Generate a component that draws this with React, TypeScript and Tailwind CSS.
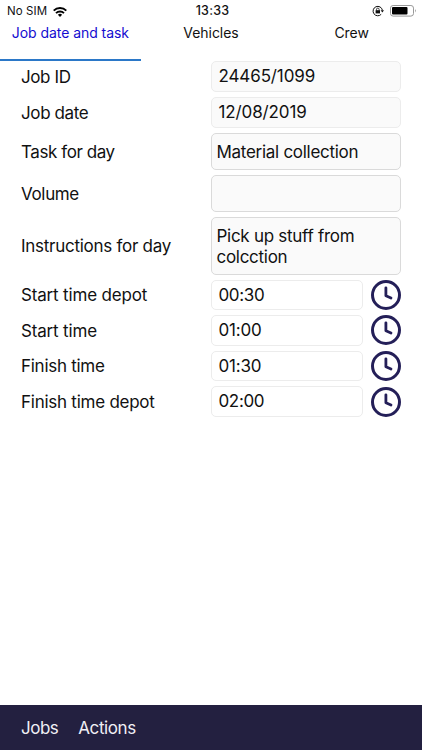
import React, { useState } from "react";

type Field = {
  label: string;
  value: string;
  kind: "readonly" | "select" | "area" | "time";
  labelClass: string;
  valueClass: string;
};

const fields: Field[] = [
  { label: "Job ID", value: "24465/1099", kind: "readonly", labelClass: "tracking-[-0.4px]", valueClass: "tracking-[-0.12px]" },
  { label: "Job date", value: "12/08/2019", kind: "readonly", labelClass: "tracking-[-0.38px]", valueClass: "tracking-[-0.12px]" },
  { label: "Task for day", value: "Material collection", kind: "select", labelClass: "tracking-[-0.42px]", valueClass: "tracking-[-0.28px]" },
  { label: "Volume", value: "", kind: "select", labelClass: "tracking-[-0.35px]", valueClass: "" },
  { label: "Instructions for day", value: "Pick up stuff from colcction", kind: "area", labelClass: "tracking-[-0.27px]", valueClass: "tracking-[-0.28px]" },
  { label: "Start time depot", value: "00:30", kind: "time", labelClass: "tracking-[-0.17px]", valueClass: "tracking-[-0.35px]" },
  { label: "Start time", value: "01:00", kind: "time", labelClass: "tracking-[-0.17px]", valueClass: "tracking-[-0.2px]" },
  { label: "Finish time", value: "01:30", kind: "time", labelClass: "tracking-[-0.27px]", valueClass: "tracking-[-0.2px]" },
  { label: "Finish time depot", value: "02:00", kind: "time", labelClass: "tracking-[-0.25px]", valueClass: "tracking-[-0.35px]" },
];

const boxStyles = {
  readonly: "w-[190.5px] h-[31px] pl-[7px] border-[#ececec] bg-[#fafafa]",
  select: "w-[190.5px] h-[37px] pl-[5px] pt-px border-[#dadada] bg-[#fafafa]",
  area: "w-[190.5px] h-[57.5px] pl-[5px] pr-6 pt-[2px] border-[#dadada] bg-[#fafafa]",
  time: "w-[152.5px] h-[30.6px] pl-[7px] border-[#ececec] bg-white",
};

const ClockIcon = () => (
  <svg width="30" height="30" viewBox="0 0 30 30" fill="none" stroke="#241f58">
    <circle cx="15" cy="15" r="13.5" strokeWidth="3" />
    <path d="M14.9 7.8V15.7L20 18" strokeWidth="2.8" strokeLinecap="round" strokeLinejoin="round" />
  </svg>
);

const StatusBar = () => (
  <div className="h-[22px] grid grid-cols-3 items-center text-[#111]">
    <div className="flex items-center pl-[7px] gap-[6px] pt-px">
      <span className="text-[11.5px] tracking-[0.1px]">No SIM</span>
      <svg width="14" height="10" viewBox="0 0 14 10" fill="none" stroke="#000" strokeWidth="1.9">
        <path d="M0.7 3.6A8.9 8.9 0 0 1 13.3 3.6" />
        <path d="M3 6.1A5.7 5.7 0 0 1 11 6.1" />
        <path d="M7 10L4.9 7.8A3 3 0 0 1 9.1 7.8Z" fill="#000" stroke="none" />
      </svg>
    </div>
    <span className="text-center text-[12.5px] font-medium pl-[3px] pt-px tracking-[0.2px]">13:33</span>
    <div className="flex items-center justify-end pr-[5px] gap-[6px]">
      <svg width="12" height="12" viewBox="0 0 12 12" fill="none" stroke="#111">
        <path d="M9.2 9.3A4.7 4.7 0 1 1 10.4 5.2" strokeWidth="1" />
        <path d="M8.6 5.2H12L10.4 7.4Z" fill="#111" stroke="none" />
        <rect x="3.6" y="5.2" width="4.4" height="3.2" fill="#111" stroke="none" />
        <path d="M4.5 5.5V4.4a1.3 1.3 0 0 1 2.6 0V5.5" strokeWidth="0.8" />
      </svg>
      <svg width="27" height="12" viewBox="0 0 27 12">
        <rect x="0.5" y="0.5" width="23" height="10.6" rx="2.6" fill="none" stroke="#999" />
        <rect x="2" y="2.1" width="15.5" height="7.4" rx="1" fill="#000" />
        <path d="M25 4Q26.6 5.8 25 7.6Z" fill="#888" />
      </svg>
    </div>
  </div>
);

const App = () => {
  const [tab, setTab] = useState(0);

  return (
    <div className="w-[422px] h-[750px] flex flex-col bg-white text-[#111] font-['Inter','Liberation_Sans',sans-serif] overflow-hidden">
      <StatusBar />
      <nav className="h-[39px] grid grid-cols-3 text-[14px] leading-[21px] tracking-[-0.05px]">
        {["Job date and task", "Vehicles", "Crew"].map((name, i) => (
          <button
            key={name}
            onClick={() => setTab(i)}
            className={`flex justify-center whitespace-nowrap border-b-2 ${tab === i ? "text-[#140cd0] border-[#2b78c8]" : "border-transparent"}`}
          >
            {name}
          </button>
        ))}
      </nav>

      <main className="grow flex flex-col gap-[5px] pl-[21px] text-[17px]">
        {fields.map((field) => (
          <div key={field.label} className="flex items-center">
            <span className={`w-[189.5px] shrink-0 leading-5 pt-px whitespace-nowrap ${field.labelClass}`}>{field.label}</span>
            <div className={`shrink-0 flex items-center border rounded-[5px] leading-[20.5px] ${boxStyles[field.kind]}`}>
              <span className={field.valueClass}>{field.value}</span>
            </div>
            {field.kind === "time" && (
              <button className="ml-2">
                <ClockIcon />
              </button>
            )}
          </div>
        ))}
      </main>

      <footer className="h-[45px] flex items-center gap-5 pl-[21px] pt-[2px] bg-[#232040] text-[17px] text-[#f0eff5]">
        <span className="tracking-[-0.5px]">Jobs</span>
        <span className="tracking-[-0.4px]">Actions</span>
      </footer>
    </div>
  );
};

export default App;
